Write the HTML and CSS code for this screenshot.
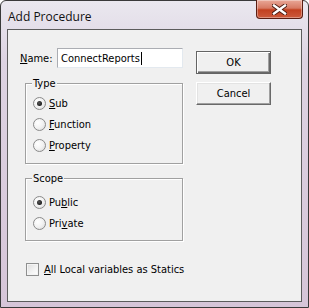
FILE: index.html
```html
<!DOCTYPE html>
<html>
<head>
<meta charset="utf-8">
<link rel="stylesheet" href="styles.css">
</head>
<body>
<div class="window">
  <div class="titlebar">
    <span class="title">Add Procedure</span>
    <button class="close" aria-label="Close">
      <svg width="15" height="11" viewBox="0 0 15 11">
        <path d="M2 1.5 L13 9.5 M13 1.5 L2 9.5" stroke="#4a1a10" stroke-width="4.2" stroke-linecap="square"/>
        <path d="M2 1.5 L13 9.5 M13 1.5 L2 9.5" stroke="#ffffff" stroke-width="2.4" stroke-linecap="square"/>
      </svg>
    </button>
  </div>
  <div class="client">
    <div class="left">
      <div class="name-row">
        <label class="name-label"><u>N</u>ame:</label>
        <div class="textbox">ConnectReports<span class="caret"></span></div>
      </div>
      <div class="group group-type">
        <span class="group-title">Type</span>
        <div class="options">
          <div class="opt"><span class="radio checked"></span><span><u>S</u>ub</span></div>
          <div class="opt"><span class="radio"></span><span><u>F</u>unction</span></div>
          <div class="opt"><span class="radio"></span><span><u>P</u>roperty</span></div>
        </div>
      </div>
      <div class="group group-scope">
        <span class="group-title">Scope</span>
        <div class="options">
          <div class="opt"><span class="radio checked"></span><span>Pu<u>b</u>lic</span></div>
          <div class="opt"><span class="radio"></span><span>Pri<u>v</u>ate</span></div>
        </div>
      </div>
      <div class="check-row"><span class="checkbox"></span><span><u>A</u>ll Local variables as Statics</span></div>
    </div>
    <div class="right">
      <button class="btn default">OK</button>
      <button class="btn">Cancel</button>
    </div>
  </div>
</div>
</body>
</html>
```

FILE: styles.css
```css
* { box-sizing: border-box; }
html, body { margin: 0; padding: 0; background: #ffffff; }
.window {
  width: 309px;
  height: 308px;
  border: 1px solid #3a3a3a;
  border-radius: 6px 6px 0 0;
  background: linear-gradient(180deg, #eae8ef 0%, #ddd3e2 20%, #d6c5d8 100%);
  padding: 0 6px 5px 6px;
  display: flex;
  flex-direction: column;
  font-family: "DejaVu Sans Condensed", "Liberation Sans", sans-serif;
  font-size: 11px;
  color: #000;
}
.titlebar {
  height: 28px;
  display: flex;
  justify-content: space-between;
  align-items: flex-start;
}
.title {
  font-family: "Open Sans", "Noto Sans", sans-serif;
  font-size: 12px;
  color: #111;
  margin-top: 7px;
  margin-left: 1px;
}
.close {
  width: 47px;
  height: 19px;
  margin: -1px -1px 0 0;
  padding: 0;
  border: 1px solid #5a1d12;
  border-top: none;
  border-radius: 0 0 4px 4px;
  background: linear-gradient(180deg, #e9a898 0%, #d77a64 45%, #c2401f 55%, #cc5a3c 100%);
  box-shadow: inset 0 0 0 1px rgba(255,255,255,0.35);
  display: flex;
  align-items: center;
  justify-content: center;
}
.client {
  flex: 1;
  border: 1px solid #5c5c5c;
  background: #f0f0f0;
  display: flex;
  padding-left: 17px;
}
.left {
  width: 158px;
  flex: none;
  display: flex;
  flex-direction: column;
}
.name-row {
  display: flex;
  align-items: center;
  margin-top: 18px;
  margin-left: -5px;
}
.name-label {
  width: 37px;
}
.textbox {
  width: 126px;
  height: 20px;
  background: #fff;
  border: 1px solid;
  border-color: #abadb3 #e3e9ef #e3e9ef #abadb3;
  padding: 0 3px;
  display: flex;
  align-items: center;
  white-space: nowrap;
}
.caret {
  display: inline-block;
  width: 1px;
  height: 13px;
  background: #000;
  margin-left: 1px;
}
.group {
  border: 1px solid #a0a0a0;
  box-shadow: inset 1px 1px 0 #fff, 1px 1px 0 #fff;
  display: flex;
  flex-direction: column;
  align-items: flex-start;
  padding-left: 7px;
}
.group-type {
  margin-top: 15px;
  height: 81px;
}
.group-scope {
  margin-top: 14px;
  height: 63px;
}
.group-title {
  line-height: 13px;
  margin: -7px 0 0 -1px;
  padding: 0 1px;
  background: #f0f0f0;
}
.options {
  display: flex;
  flex-direction: column;
}
.group-type .options { margin-top: 3px; }
.group-scope .options { margin-top: 7px; }
.opt {
  height: 21px;
  display: flex;
  align-items: center;
}
.radio {
  width: 13px;
  height: 13px;
  border-radius: 50%;
  border: 1px solid #8a8a8a;
  background: radial-gradient(circle at 35% 35%, #ffffff 0%, #f2f2f2 50%, #d6d6d6 100%);
  margin-right: 3px;
  display: flex;
  align-items: center;
  justify-content: center;
  flex: none;
}
.radio.checked::after {
  content: "";
  width: 5px;
  height: 5px;
  border-radius: 50%;
  background: radial-gradient(circle at 40% 40%, #5a5a5a 0%, #111 80%);
}
.check-row {
  display: flex;
  align-items: center;
  margin-top: 22px;
  margin-left: 1px;
  white-space: nowrap;
}
.checkbox {
  width: 13px;
  height: 13px;
  border: 1px solid #8e8f8f;
  background: linear-gradient(135deg, #dcdcdc 0%, #f4f4f4 60%, #ffffff 100%);
  box-shadow: inset 0 0 0 1px #f4f4f4;
  margin-right: 5px;
  flex: none;
}
.right {
  margin-left: 13px;
  padding-top: 21px;
  display: flex;
  flex-direction: column;
  gap: 8px;
}
.btn {
  width: 75px;
  height: 23px;
  padding: 0;
  font-family: "DejaVu Sans Condensed", "Liberation Sans", sans-serif;
  font-size: 11px;
  color: #000;
  background: #f0f0f0;
  border: 1px solid;
  border-color: #ffffff #696969 #696969 #ffffff;
  box-shadow: inset -1px -1px 0 #a0a0a0, inset 1px 1px 0 #e3e3e3;
}
.btn.default {
  border: 1px solid #646464;
  box-shadow: inset 1px 1px 0 #ffffff, inset -1px -1px 0 #696969, inset -2px -2px 0 #a0a0a0;
}
```
